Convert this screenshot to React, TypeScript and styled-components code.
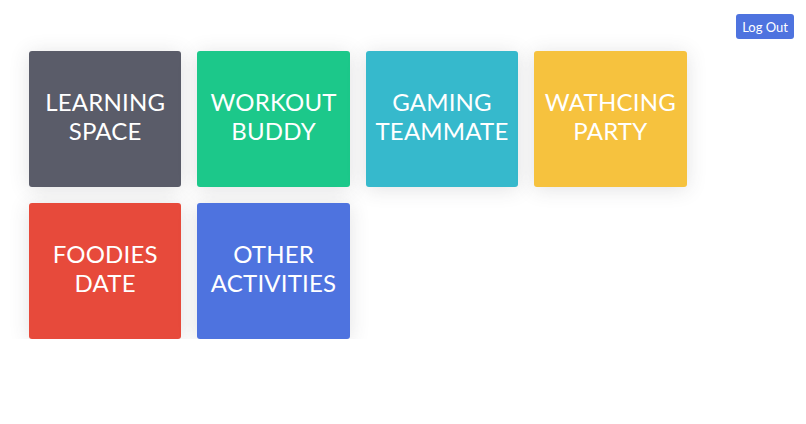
import styled, { createGlobalStyle } from "styled-components";

const GlobalStyles = createGlobalStyle`
  html, body {
    margin: 0;
    padding: 0;
    background: #fff;
    font-family: "Lato", "Noto Sans", sans-serif;
  }
`;

const Page = styled.div`
  padding: 14px 12px 0 29px;
`;

const TopBar = styled.div`
  display: flex;
  justify-content: flex-end;
`;

const LogoutButton = styled.button`
  height: 25px;
  padding: 0 6px;
  border: none;
  border-radius: 3px;
  background: #4e73df;
  color: #fff;
  font-family: "Lato", "Noto Sans", sans-serif;
  font-size: 13px;
  cursor: pointer;
`;

const Grid = styled.div`
  display: grid;
  grid-template-columns: repeat(4, 152.4px);
  grid-auto-rows: 136px;
  gap: 16px 16px;
  margin-top: 12px;
`;

const Card = styled.div<{ $bg: string }>`
  background: ${(p) => p.$bg};
  border-radius: 3px;
  box-shadow: 0 2px 20px 0 rgba(58, 59, 69, 0.15);
  display: flex;
  align-items: center;
  justify-content: center;
  padding-bottom: 6px;
  box-sizing: border-box;
  text-align: center;
  color: #fff;
  font-size: 24px;
  line-height: 29px;
  font-weight: 400;
  letter-spacing: 0.2px;
`;

const activities = [
  { label: ["LEARNING", "SPACE"], color: "#5a5c69" },
  { label: ["WORKOUT", "BUDDY"], color: "#1cc88a" },
  { label: ["GAMING", "TEAMMATE"], color: "#36b9cc" },
  { label: ["WATHCING", "PARTY"], color: "#f6c23e" },
  { label: ["FOODIES", "DATE"], color: "#e74a3b" },
  { label: ["OTHER", "ACTIVITIES"], color: "#4e73df" },
];

const App = () => {
  return (
    <>
      <GlobalStyles />
      <Page>
        <TopBar>
          <LogoutButton>Log Out</LogoutButton>
        </TopBar>
        <Grid>
          {activities.map((a) => (
            <Card key={a.label.join(" ")} $bg={a.color}>
              <div>
                {a.label[0]}
                <br />
                {a.label[1]}
              </div>
            </Card>
          ))}
        </Grid>
      </Page>
    </>
  );
};

export default App;
